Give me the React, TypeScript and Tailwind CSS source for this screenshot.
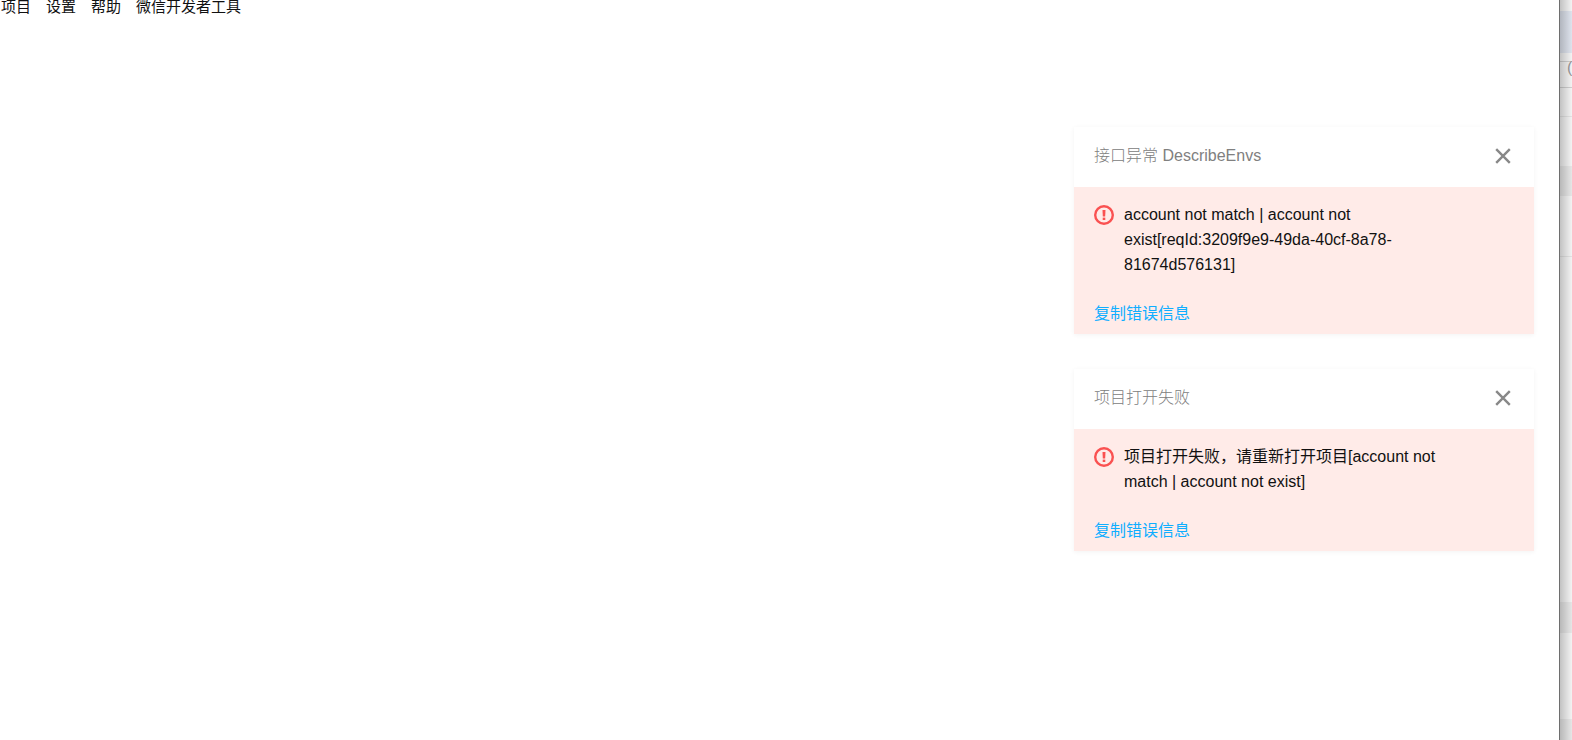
import type { ReactNode } from 'react'

type Notice = {
  id: string
  title: string
  message: string
}

const menuItems = ['项目', '设置', '帮助', '微信开发者工具']

const notices: Notice[] = [
  {
    id: 'describe-envs',
    title: '接口异常 DescribeEnvs',
    message:
      'account not match | account not exist[reqId:3209f9e9-49da-40cf-8a78-81674d576131]'
  },
  {
    id: 'open-project',
    title: '项目打开失败',
    message: '项目打开失败，请重新打开项目[account not match | account not exist]'
  }
]

export default function App() {
  return (
    <div className="flex min-h-screen bg-white font-['Liberation_Sans','Noto_Sans_CJK_SC',sans-serif] text-[#111111]">
      <Window>
        <MenuBar />
        <section
          aria-label="通知"
          className="mt-[113px] mr-[25px] flex w-[460px] max-w-full flex-col gap-[35px] self-end"
        >
          {notices.map(notice => (
            <NoticeCard key={notice.id} notice={notice} />
          ))}
        </section>
      </Window>
      <BackgroundWindow />
    </div>
  )
}

function Window({ children }: { children: ReactNode }) {
  return (
    <main className="flex min-w-0 flex-1 flex-col border-r border-[#6e6e6e]">
      {children}
    </main>
  )
}

function MenuBar() {
  return (
    <nav className="flex h-[14px] items-center gap-[15px] pl-px text-[15px] leading-[14px]">
      {menuItems.map(item => (
        <button key={item} type="button">
          {item}
        </button>
      ))}
    </nav>
  )
}

function NoticeCard({ notice }: { notice: Notice }) {
  return (
    <article className="text-base leading-[25px] shadow-[0_1px_5px_rgba(0,0,0,0.05)]">
      <header className="flex h-[60px] items-center justify-between pr-[23px] pb-[3px] pl-5">
        <h2 className="font-light text-[#808080]">{notice.title}</h2>
        <button type="button" aria-label="关闭">
          <CloseIcon />
        </button>
      </header>
      <div className="bg-[#ffebe8] px-5 pt-[15px] pb-2">
        <div className="flex gap-[10px] pr-10">
          <ErrorIcon />
          <p className="min-w-0 flex-1">{notice.message}</p>
        </div>
        <a href="#copy" className="mt-6 block w-fit text-[#10aeff]">
          复制错误信息
        </a>
      </div>
    </article>
  )
}

// Edge of the window lying behind, darkened by the shadow of the front one
function BackgroundWindow() {
  return (
    <aside className="relative flex w-3 shrink-0 flex-col overflow-hidden bg-[#f3f3f3]">
      <div className="h-[11px]" />
      <div className="h-[42px] bg-[#dee3ed]" />
      <div className="h-2" />
      <div className="h-[27px] border-y border-[#cfcfcf] pl-[7px] text-base leading-[12px] text-[#999999]">
        (
      </div>
      <div className="h-[29px] border-b border-[#e2e2e2]" />
      <div className="h-[49px]" />
      <div className="h-[30px] bg-[#e6e6e6]" />
      <div className="h-[61px] border-b border-[#e2e2e2]" />
      <div className="flex-1" />
      <div className="h-[31px] bg-[#e6e6e6]" />
      <div className="h-[86px]" />
      <div className="h-[21px] bg-[#e6e6e6]" />
      <div className="absolute inset-0 bg-gradient-to-r from-black/20 to-black/0" />
    </aside>
  )
}

function CloseIcon() {
  return (
    <svg width="16" height="16" viewBox="0 0 16 16" className="block">
      <path
        d="M1.2 1.2 14.8 14.8M14.8 1.2 1.2 14.8"
        stroke="#888888"
        strokeWidth="2.4"
      />
    </svg>
  )
}

function ErrorIcon() {
  return (
    <svg
      width="20"
      height="20"
      viewBox="0 0 20 20"
      className="mt-[3px] shrink-0"
    >
      <circle
        cx="10"
        cy="10"
        r="8.8"
        fill="none"
        stroke="#fa5151"
        strokeWidth="2.4"
      />
      <path d="M8.5 5h3l-.3 6.5H8.8z" fill="#fa5151" />
      <path d="M8.7 12.6h2.6V15H8.7z" fill="#fa5151" />
    </svg>
  )
}
